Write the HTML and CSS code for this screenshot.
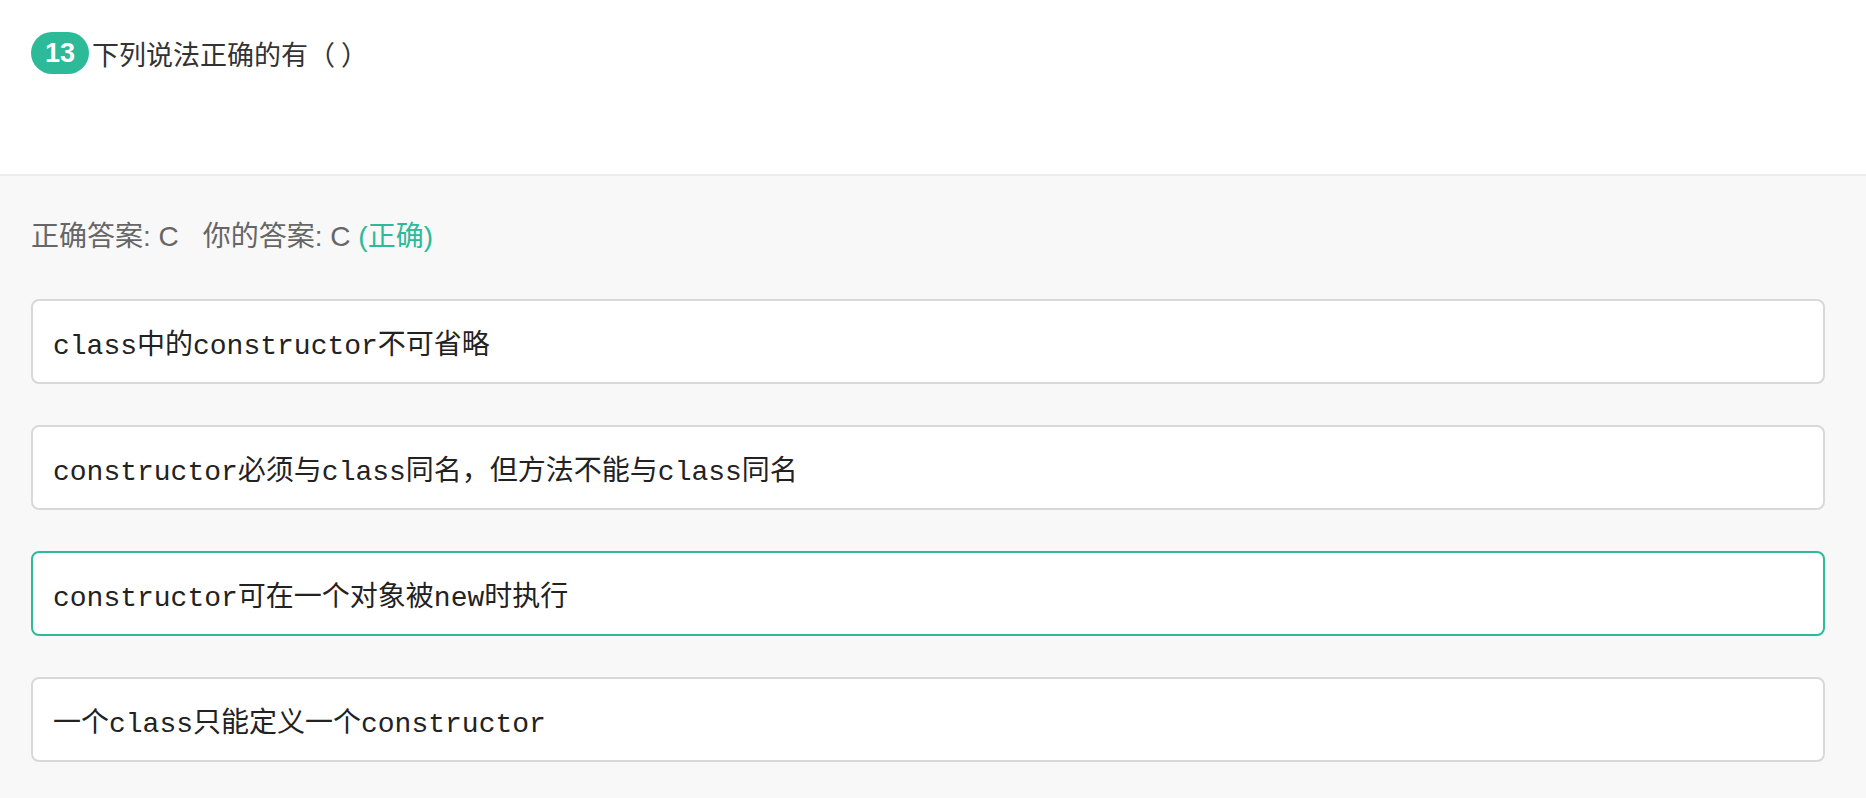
FILE: index.html
```html
<!DOCTYPE html>
<html lang="zh-CN">
<head>
<meta charset="utf-8">
<title>题目 13</title>
<link rel="stylesheet" href="styles.css">
</head>
<body>
<section class="question">
  <div class="question-row">
    <span class="badge">13</span>
    <span class="question-text">下列说法正确的有（&nbsp;）</span>
  </div>
</section>
<section class="answer-area">
  <p class="result">正确答案: C<span class="gap"></span>你的答案: C <span class="ok">(正确)</span></p>
  <ul class="options">
    <li class="option">class中的constructor不可省略</li>
    <li class="option">constructor必须与class同名，但方法不能与class同名</li>
    <li class="option option-selected">constructor可在一个对象被new时执行</li>
    <li class="option">一个class只能定义一个constructor</li>
  </ul>
</section>
</body>
</html>
```

FILE: styles.css
```css
html, body {
  margin: 0;
  padding: 0;
  background: #f8f8f8;
}

body {
  font-family: "Liberation Sans", "Noto Sans CJK SC", sans-serif;
  color: #333;
}

.question {
  background: #fff;
  height: 176px;
  box-sizing: border-box;
  padding: 32px 30px 0 31px;
  border-bottom: 2px solid #ececec;
}

.question-row {
  display: flex;
  align-items: center;
}

.badge {
  display: inline-flex;
  align-items: center;
  justify-content: center;
  width: 58px;
  height: 42px;
  border-radius: 21px;
  background: #2dba99;
  color: #fff;
  font-size: 27px;
  font-weight: bold;
  font-family: "Liberation Sans", sans-serif;
}

.question-text {
  margin-left: 3px;
  font-size: 27px;
  color: #333;
  font-family: "Noto Sans CJK SC", sans-serif;
}

.answer-area {
  padding: 44px 41px 40px 31px;
}

.result {
  margin: 0 0 45px 0;
  font-size: 28px;
  line-height: 34px;
  color: #666;
}

.gap {
  display: inline-block;
  width: 24px;
}

.ok {
  color: #2dba99;
}

.options {
  list-style: none;
  margin: 0;
  padding: 0;
  display: flex;
  flex-direction: column;
  gap: 41px;
}

.option {
  display: flex;
  align-items: center;
  height: 85px;
  box-sizing: border-box;
  padding: 0 20px;
  background: #fff;
  border: 2px solid #d8d8d8;
  border-radius: 8px;
  font-family: "Liberation Mono", "Noto Sans CJK SC", monospace;
  font-size: 28px;
  color: #222;
}

.option-selected {
  border-color: #2dba99;
}
```
